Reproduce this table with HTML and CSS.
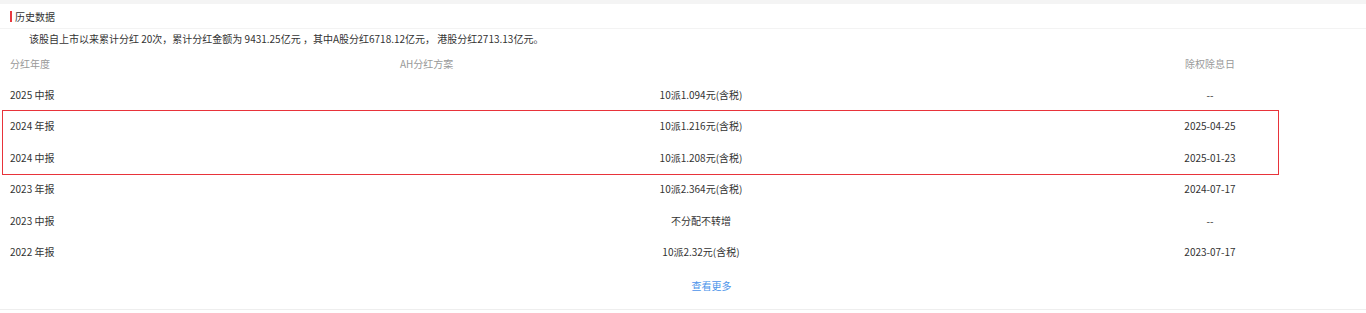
FILE: index.html
```html
<!DOCTYPE html>
<html lang="zh-CN">
<head>
<meta charset="utf-8">
<title>历史数据</title>
<link rel="stylesheet" href="styles.css">
</head>
<body>
<div class="topband"></div>
<section class="panel">
  <div class="title-row"><span class="title-bar"></span><span class="title">历史数据</span></div>
  <p class="summary">该股自上市以来累计分红 20次，累计分红金额为 9431.25亿元 ，其中A股分红6718.12亿元， 港股分红2713.13亿元。</p>
  <div class="table">
    <div class="row head">
      <div class="c1">分红年度</div>
      <div class="c2 left">AH分红方案</div>
      <div class="c3"></div>
      <div class="c4">除权除息日</div>
    </div>
    <div class="row">
      <div class="c1">2025 中报</div><div class="c2">10派1.094元(含税)</div><div class="c3"></div><div class="c4">--</div>
    </div>
    <div class="group">
      <div class="row">
        <div class="c1">2024 年报</div><div class="c2">10派1.216元(含税)</div><div class="c3"></div><div class="c4">2025-04-25</div>
      </div>
      <div class="row">
        <div class="c1">2024 中报</div><div class="c2">10派1.208元(含税)</div><div class="c3"></div><div class="c4">2025-01-23</div>
      </div>
    </div>
    <div class="row">
      <div class="c1">2023 年报</div><div class="c2">10派2.364元(含税)</div><div class="c3"></div><div class="c4">2024-07-17</div>
    </div>
    <div class="row">
      <div class="c1">2023 中报</div><div class="c2">不分配不转增</div><div class="c3"></div><div class="c4">--</div>
    </div>
    <div class="row">
      <div class="c1">2022 年报</div><div class="c2">10派2.32元(含税)</div><div class="c3"></div><div class="c4">2023-07-17</div>
    </div>
  </div>
  <div class="more-row"><a class="more" href="#">查看更多</a></div>
</section>
</body>
</html>
```
FILE: styles.css
```css
* { box-sizing: border-box; }
html, body { margin: 0; padding: 0; background: #fff; }
body {
  font-family: "Noto Sans CJK SC", "Microsoft YaHei", sans-serif;
  font-size: 10px;
  color: #333;
  width: 1366px;
  height: 313px;
  overflow: hidden;
}
.topband { height: 4px; background: #f4f4f4; }
.panel { border-bottom: 1px solid #eeeeee; height: 306px; }
.title-row {
  height: 25px;
  display: flex;
  align-items: center;
  padding-left: 10px;
  border-bottom: 1px solid #f3f3f3;
}
.title-bar { width: 2px; height: 11px; background: #e8393f; margin-right: 3px; }
.title { line-height: 25px; color: #333; }
.summary { margin: 0; padding-left: 29px; height: 20px; line-height: 20px; color: #333; }
.table { width: 1275px; margin-left: 3px; }
.row {
  display: grid;
  grid-template-columns: 397px 602px 140px 136px;
  height: 31.4px;
  align-items: center;
  line-height: 14px;
}
.row.head { color: #999; margin-top: -1px; }
.c1 { padding-left: 7px; }
.c2 { text-align: center; }
.c2.left { text-align: left; }
.c4 { text-align: center; }
.group { outline: 1px solid #e8333a; }
.more-row { display: flex; justify-content: center; padding-left: 57px; height: 36px; align-items: center; }
.more { color: #4b94ea; text-decoration: none; }
```
